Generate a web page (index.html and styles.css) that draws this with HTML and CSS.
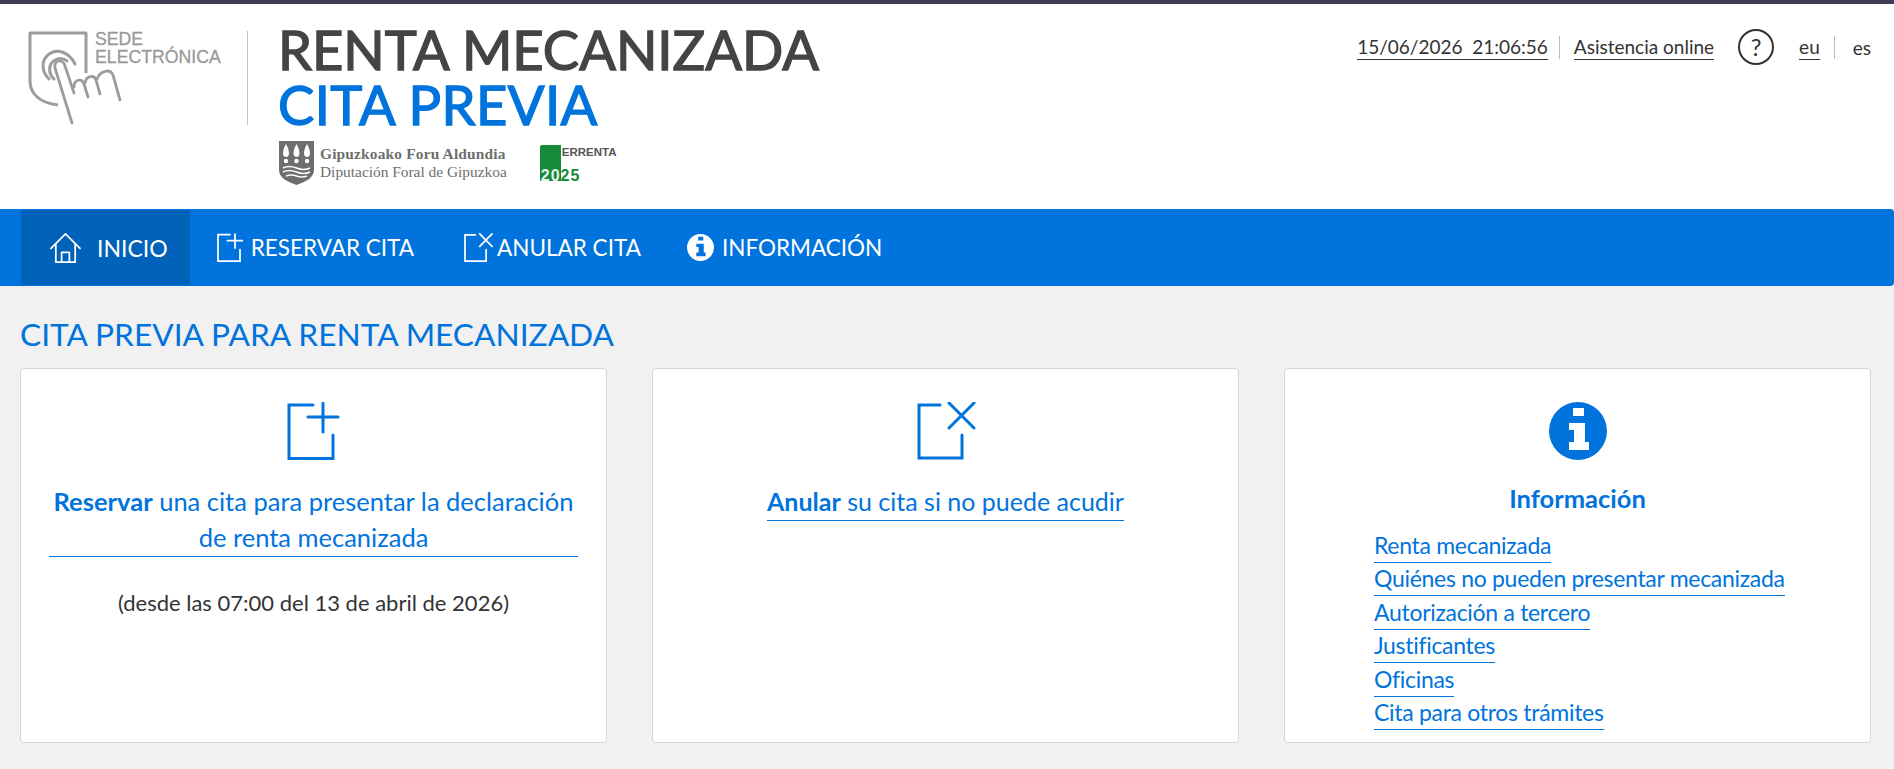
FILE: index.html
```html
<!DOCTYPE html>
<html lang="es">
<head>
    <meta charset="UTF-8">
    <title>Renta mecanizada - Cita previa</title>
    <link rel="stylesheet" href="styles.css">
</head>
<body>
    <header class="cabecera">
        <div class="marca">
            <a class="sede" href="#">
                <svg class="sede-mano" viewBox="0 0 95 95" width="95" height="95" fill="none" stroke="#9c9c9c" stroke-linecap="round" stroke-linejoin="round">
                    <path stroke-width="3" stroke-linecap="butt" d="M58 42V2H2V50C2 62 11 72 30 74"/>
                    <path stroke-width="3" fill="#fff" d="M21 48C13 40 13 29 21 23C29 17 41 21 47 33"/>
                    <path stroke-width="3" d="M26 48C20 42 20 33 27 29C31 27 36 27 39 30"/>
                    <path stroke-width="2.800" fill="#fff" d="M44 92L27 37C25 29 35 27 37 35L46 62"/>
                    <path stroke-width="2.800" d="M46 56C46 48 54 47 56 53L60 66M57 52C58 45 66 43 68 49L72 63M69 48C72 40 82 37 85 44L92 69"/>
                </svg>
                <span class="sede-texto"><span>SEDE</span><span>ELECTRÓNICA</span></span>
            </a>
        </div>
        <div class="titulos">
            <h1>RENTA MECANIZADA</h1>
            <h2>CITA PREVIA</h2>
            <div class="logos">
                <div class="gfa">
                    <svg viewBox="0 0 35 44" width="35" height="44">
                        <path fill="#6e6e6e" d="M0 0H35V29C35 37 26 41 17.5 44C9 41 0 37 0 29Z"/>
                        <path fill="#fff" d="M7 16C3 16 3 10 7 3C11 10 11 16 7 16ZM17.500 16C13.500 16 13.500 10 17.500 3C21.500 10 21.500 16 17.500 16ZM28 16C24 16 24 10 28 3C32 10 32 16 28 16Z"/>
                        <circle cx="7" cy="20" r="2.200" fill="#fff"/>
                        <circle cx="17.500" cy="20" r="2.200" fill="#fff"/>
                        <circle cx="28" cy="20" r="2.200" fill="#fff"/>
                        <path fill="none" stroke="#fff" stroke-width="1.600" d="M4 27Q10 24 17.500 27T31 27M4 31Q10 28 17.500 31T31 31M7 35Q12 33 17.500 35T28 35"/>
                    </svg>
                    <div class="gfa-texto">
                        <strong>Gipuzkoako Foru Aldundia</strong>
                        <span>Diputación Foral de Gipuzkoa</span>
                    </div>
                </div>
                <div class="errenta">
                    <span class="errenta-nombre">ERRENTA</span>
                    <span class="errenta-anio"><b>20</b>25</span>
                </div>
            </div>
        </div>
        <div class="herramientas">
            <span class="enlace">15/06/2026&nbsp;&nbsp;21:06:56</span>
            <i class="sep"></i>
            <a class="enlace" href="#">Asistencia online</a>
            <a class="ayuda" href="#">?</a>
            <a class="enlace" href="#">eu</a>
            <i class="sep sep-idioma"></i>
            <a class="idioma" href="#">es</a>
        </div>
    </header>

    <nav class="menu">
        <a class="menu-item activo" href="#">
            <svg viewBox="0 0 32 31" width="31" height="30" fill="none" stroke="#fff" stroke-width="1.800" stroke-linecap="round" stroke-linejoin="round">
                <path d="M1 16L16 1L31 16"/>
                <path d="M6 12V30H26V12"/>
                <path d="M12 30V20H20V30"/>
            </svg>
            INICIO
        </a>
        <a class="menu-item" href="#">
            <svg viewBox="0 0 52 58" width="26" height="29" fill="none" stroke="#fff" stroke-width="3.500" stroke-linecap="round">
                <path d="M26 3H2V56H46V33"/>
                <path d="M36 2V30M21 15H51"/>
            </svg>
            RESERVAR CITA
        </a>
        <a class="menu-item anular" href="#">
            <svg viewBox="0 0 59 59" width="29" height="29" fill="none" stroke="#fff" stroke-width="3.500" stroke-linecap="round">
                <path d="M23 4H2V57H45V34"/>
                <path d="M32 2L57 27M57 2L32 27"/>
            </svg>
            ANULAR CITA
        </a>
        <a class="menu-item" href="#">
            <svg viewBox="0 0 58 58" width="27" height="27">
                <path fill="#fff" fill-rule="evenodd" d="M29 0A29 29 0 1 1 29 58A29 29 0 1 1 29 0ZM24 6V14H35V6ZM20 21V28H25V40H20V48H40V40H36V21Z"/>
            </svg>
            INFORMACIÓN
        </a>
    </nav>

    <main class="contenido">
        <h3 class="titulo-seccion">CITA PREVIA PARA RENTA MECANIZADA</h3>
        <div class="tarjetas">
            <section class="tarjeta">
                <svg class="tarjeta-ico" viewBox="0 0 54 58" width="54" height="58" fill="none" stroke="#0073dc" stroke-width="3" stroke-linecap="round">
                    <path d="M26 3H2V56.500H46V33"/>
                    <path d="M36 1V30M21 15H51"/>
                </svg>
                <a class="accion" href="#"><b>Reservar</b> una cita para presentar la declaración de renta mecanizada</a>
                <p class="nota">(desde las 07:00 del 13 de abril de 2026)</p>
            </section>
            <section class="tarjeta">
                <svg class="tarjeta-ico" viewBox="-2 0 61 58" width="61" height="58" fill="none" stroke="#0073dc" stroke-width="3" stroke-linecap="round">
                    <path d="M23 3H2V56H45V33"/>
                    <path d="M32 1L57 26M57 1L32 26"/>
                </svg>
                <a class="accion corta" href="#"><b>Anular</b> su cita si no puede acudir</a>
            </section>
            <section class="tarjeta">
                <svg class="tarjeta-ico" viewBox="0 0 58 58" width="58" height="58">
                    <path fill="#0073dc" fill-rule="evenodd" d="M29 0A29 29 0 1 1 29 58A29 29 0 1 1 29 0ZM24 6V14H35V6ZM20 21V28H25V40H20V48H40V40H36V21Z"/>
                </svg>
                <h4>Información</h4>
                <ul class="enlaces">
                    <li><a href="#">Renta mecanizada</a></li>
                    <li><a href="#">Quiénes no pueden presentar mecanizada</a></li>
                    <li><a href="#">Autorización a tercero</a></li>
                    <li><a href="#">Justificantes</a></li>
                    <li><a href="#">Oficinas</a></li>
                    <li><a href="#">Cita para otros trámites</a></li>
                </ul>
            </section>
        </div>
    </main>
</body>
</html>
```

FILE: styles.css
```css
*{
    margin: 0;
    padding: 0;
    box-sizing: border-box;
}
body{
    font-family: "Lato", "Liberation Sans", sans-serif;
    background-color: #f1f1f1;
    color: #333;
    height: 769px;
    overflow: hidden;
}
a{
    color: inherit;
    text-decoration: none;
}

.cabecera{
    display: flex;
    height: 209px;
    background-color: #fff;
    border-top: 4px solid #3f3d56;
}
.marca{
    width: 248px;
    height: 94px;
    margin-top: 27px;
    padding-left: 28px;
    border-right: 1px solid #c4c4c4;
}
.sede{
    display: grid;
    width: 200px;
}
.sede-mano,
.sede-texto{
    grid-area: 1 / 1;
}
.sede-texto{
    display: flex;
    flex-direction: column;
    margin-top: -1px;
    padding-left: 67px;
    font-family: "Liberation Sans", sans-serif;
    font-size: 17.700px;
    line-height: 18px;
    color: #999;
    -webkit-text-stroke: 0.3px #999;
}
.titulos{
    margin-left: 30px;
    padding-top: 18px;
}
.titulos h1,
.titulos h2{
    font-size: 54.300px;
    font-weight: 400;
    line-height: 55px;
    white-space: nowrap;
    -webkit-text-stroke: 1.400px;
}
.titulos h1{
    color: #444;
}
.titulos h2{
    color: #0073dc;
    letter-spacing: 0.400px;
}
.logos{
    display: flex;
    margin-top: 9px;
    margin-left: 1px;
}
.gfa{
    display: flex;
    align-items: center;
    gap: 6px;
    color: #6e6e6e;
    font-family: "Liberation Serif", serif;
    font-size: 15.400px;
    line-height: 18px;
}
.gfa-texto{
    display: flex;
    flex-direction: column;
}
.gfa-texto strong{
    letter-spacing: 0.180px;
}
.errenta{
    display: flex;
    flex-direction: column;
    justify-content: space-between;
    width: 78px;
    height: 37px;
    margin: 4px 0 0 33px;
    padding-left: 22px;
    background: linear-gradient(#158a39, #158a39) no-repeat 0 0 / 21px 36px;
    border-radius: 2px;
}
.errenta-nombre{
    font-family: "Liberation Sans", sans-serif;
    font-size: 11.500px;
    font-weight: 700;
    line-height: 12px;
    padding-top: 1px;
    color: #555;
}
.errenta-anio{
    margin-left: -21px;
    font-family: "Liberation Sans", sans-serif;
    font-size: 16px;
    font-weight: 700;
    line-height: 13px;
    letter-spacing: 1px;
    color: #158a39;
}
.errenta-anio b{
    color: #e6f3ea;
}

.herramientas{
    display: flex;
    align-items: center;
    height: 36px;
    margin: 25px 23px 0 auto;
    font-size: 19px;
    color: #333;
}
.enlace{
    line-height: 24px;
    border-bottom: 1px solid #333;
}
.sep{
    width: 1px;
    height: 23px;
    margin: 0 14px 0 11px;
    background-color: #bbb;
}
.sep-idioma{
    margin: 0 18px 0 14px;
}
.ayuda{
    width: 36px;
    height: 36px;
    margin: 0 25px 0 24px;
    border: 2px solid #333;
    border-radius: 50%;
    font-size: 24px;
    line-height: 32px;
    text-align: center;
}

.menu{
    display: flex;
    height: 77px;
    padding: 1px 0 1px 21px;
    background-color: #0073dc;
    border-radius: 0 4px 4px 0;
    color: #fff;
    font-size: 22.500px;
}
.menu-item{
    display: flex;
    align-items: center;
    gap: 8px;
    padding: 0 21px 0 27px;
    white-space: nowrap;
}
.menu-item.anular{
    padding: 0 19px 0 29px;
}
.menu-item.anular svg{
    margin-right: -4px;
}
.menu-item.activo{
    background-color: #0062b8;
    padding: 0 22px 0 29px;
    gap: 16px;
    font-size: 23px;
}

.contenido{
    padding: 28px 23px 0 20px;
}
.titulo-seccion{
    font-size: 31.700px;
    font-weight: 400;
    line-height: 40px;
    margin-bottom: 14px;
    color: #0073dc;
}
.tarjetas{
    display: grid;
    grid-template-columns: repeat(3, 1fr);
    gap: 45px;
}
.tarjeta{
    display: flex;
    flex-direction: column;
    align-items: center;
    height: 375px;
    padding: 33px 28px 0;
    background-color: #fff;
    border: 1px solid #d6d6d6;
    border-radius: 4px;
}
.tarjeta-ico{
    flex: none;
}
.accion{
    display: block;
    width: 100%;
    margin-top: 23px;
    padding-bottom: 1px;
    border-bottom: 1px solid #0073dc;
    color: #0073dc;
    font-size: 25.500px;
    line-height: 36px;
    text-align: center;
}
.accion.corta{
    width: auto;
    font-size: 25px;
}
.nota{
    margin-top: 31px;
    font-size: 22px;
    line-height: 30px;
    color: #333;
}
.tarjeta h4{
    margin-top: 23px;
    color: #0073dc;
    font-size: 25.500px;
    font-weight: 700;
    line-height: 30px;
}
.enlaces{
    list-style: none;
    align-self: flex-start;
    margin: 17px 0 0 61px;
}
.enlaces li{
    height: 33.400px;
}
.enlaces a{
    display: inline-block;
    height: 33px;
    line-height: 30px;
    font-size: 23px;
    letter-spacing: -0.300px;
    color: #0073dc;
    border-bottom: 1px solid #0073dc;
}
```
